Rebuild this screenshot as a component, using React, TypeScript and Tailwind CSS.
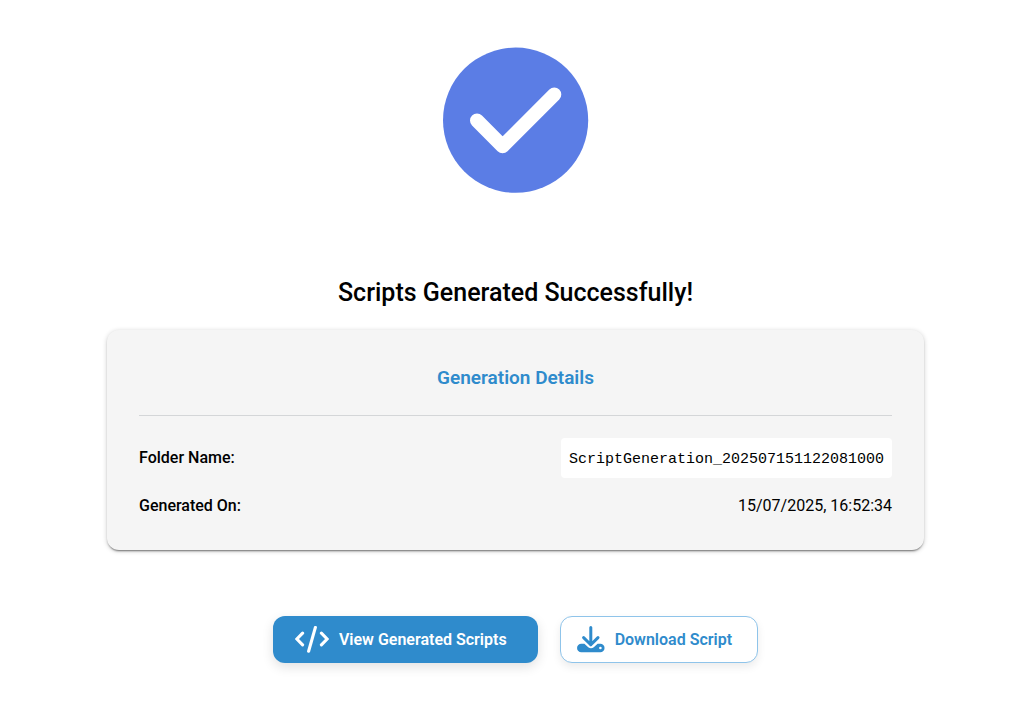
import React from 'react';

interface DetailRowProps {
  label: string;
  children: React.ReactNode;
}

const SuccessIcon: React.FC = () => (
  <svg viewBox="0 0 146 146" className="w-[146px] h-[146px]" aria-hidden="true">
    <circle cx="72.6" cy="73.2" r="72.6" fill="#5b7de5" />
    <path d="M34 73.5 L59.6 99.2 L111.3 47.5" fill="none" stroke="#fff" strokeWidth="14" strokeLinecap="round" strokeLinejoin="round" />
  </svg>
);

const CodeIcon: React.FC = () => (
  <svg viewBox="0 0 34 28" className="w-[34px] h-7" fill="none" stroke="currentColor" strokeWidth="3.1" strokeLinecap="round" aria-hidden="true">
    <path d="M7.6 7.2 L1.9 13 L7.6 18.8" />
    <path d="M20.4 1.4 L13.6 25.2" />
    <path d="M26.4 7.2 L32.1 13 L26.4 18.8" />
  </svg>
);

const DownloadIcon: React.FC = () => (
  <svg viewBox="0 0 28 28" className="w-7 h-7" fill="none" aria-hidden="true">
    <path d="M4.3 17.8 H7.4 L11.2 21.2 Q14 23.4 16.8 21.2 L20.6 17.8 H23.3 A4.2 4.2 0 0 1 23.3 26.3 H4.3 A4.2 4.2 0 0 1 4.3 17.8 Z" fill="currentColor" />
    <circle cx="23.4" cy="22" r="1.3" fill="#fff" />
    <path d="M13.8 1.5 V18.8 M6.6 11.6 L13.8 18.8 L21 11.6" stroke="currentColor" strokeWidth="3" strokeLinecap="round" strokeLinejoin="round" />
  </svg>
);

const DetailRow: React.FC<DetailRowProps> = ({ label, children }) => (
  <div className="flex items-center justify-between">
    <dt className="font-medium">{label}</dt>
    <dd>{children}</dd>
  </div>
);

const App: React.FC = () => {
  return (
    <main className="flex flex-col items-center pt-[47px] pb-11 pl-[107px] pr-[100px] bg-white text-black text-base font-['Roboto',sans-serif]">
      <SuccessIcon />
      <h1 className="mt-20 text-[25px] leading-10 font-medium">Scripts Generated Successfully!</h1>

      <section className="mt-[17px] w-full p-8 rounded-xl bg-neutral-100 shadow-[0_2px_2px_-1px_rgba(0,0,0,0.5),0_1px_5px_rgba(0,0,0,0.2)]">
        <h2 className="pb-[21px] border-b border-[#d4d6d8] text-center text-[19px] leading-8 font-semibold text-[#2f8bcc]">
          Generation Details
        </h2>
        <dl className="mt-[22px] flex flex-col gap-4">
          <DetailRow label="Folder Name:">
            <code className="block px-2 pt-2.5 pb-1.5 rounded bg-white text-[15px] leading-6 font-['Liberation_Mono',monospace]">
              ScriptGeneration_202507151122081000
            </code>
          </DetailRow>
          <DetailRow label="Generated On:">15/07/2025, 16:52:34</DetailRow>
        </dl>
      </section>

      <div className="mt-[66px] flex flex-wrap justify-center gap-[22px] font-semibold">
        <button type="button" className="h-[47px] pl-[22px] pr-[31px] flex items-center gap-2.5 rounded-xl bg-[#2f8bcc] text-white shadow-[0_4px_12px_rgba(0,0,0,0.12)]">
          <CodeIcon />
          <span>View Generated Scripts</span>
        </button>
        <button type="button" className="h-[47px] pl-4 pr-[25px] flex items-center gap-2.5 rounded-xl border border-[#8fc4ea] bg-white text-[#2f8bcc] shadow-[0_4px_8px_rgba(0,0,0,0.08)]">
          <DownloadIcon />
          <span>Download Script</span>
        </button>
      </div>
    </main>
  );
};

export default App;
